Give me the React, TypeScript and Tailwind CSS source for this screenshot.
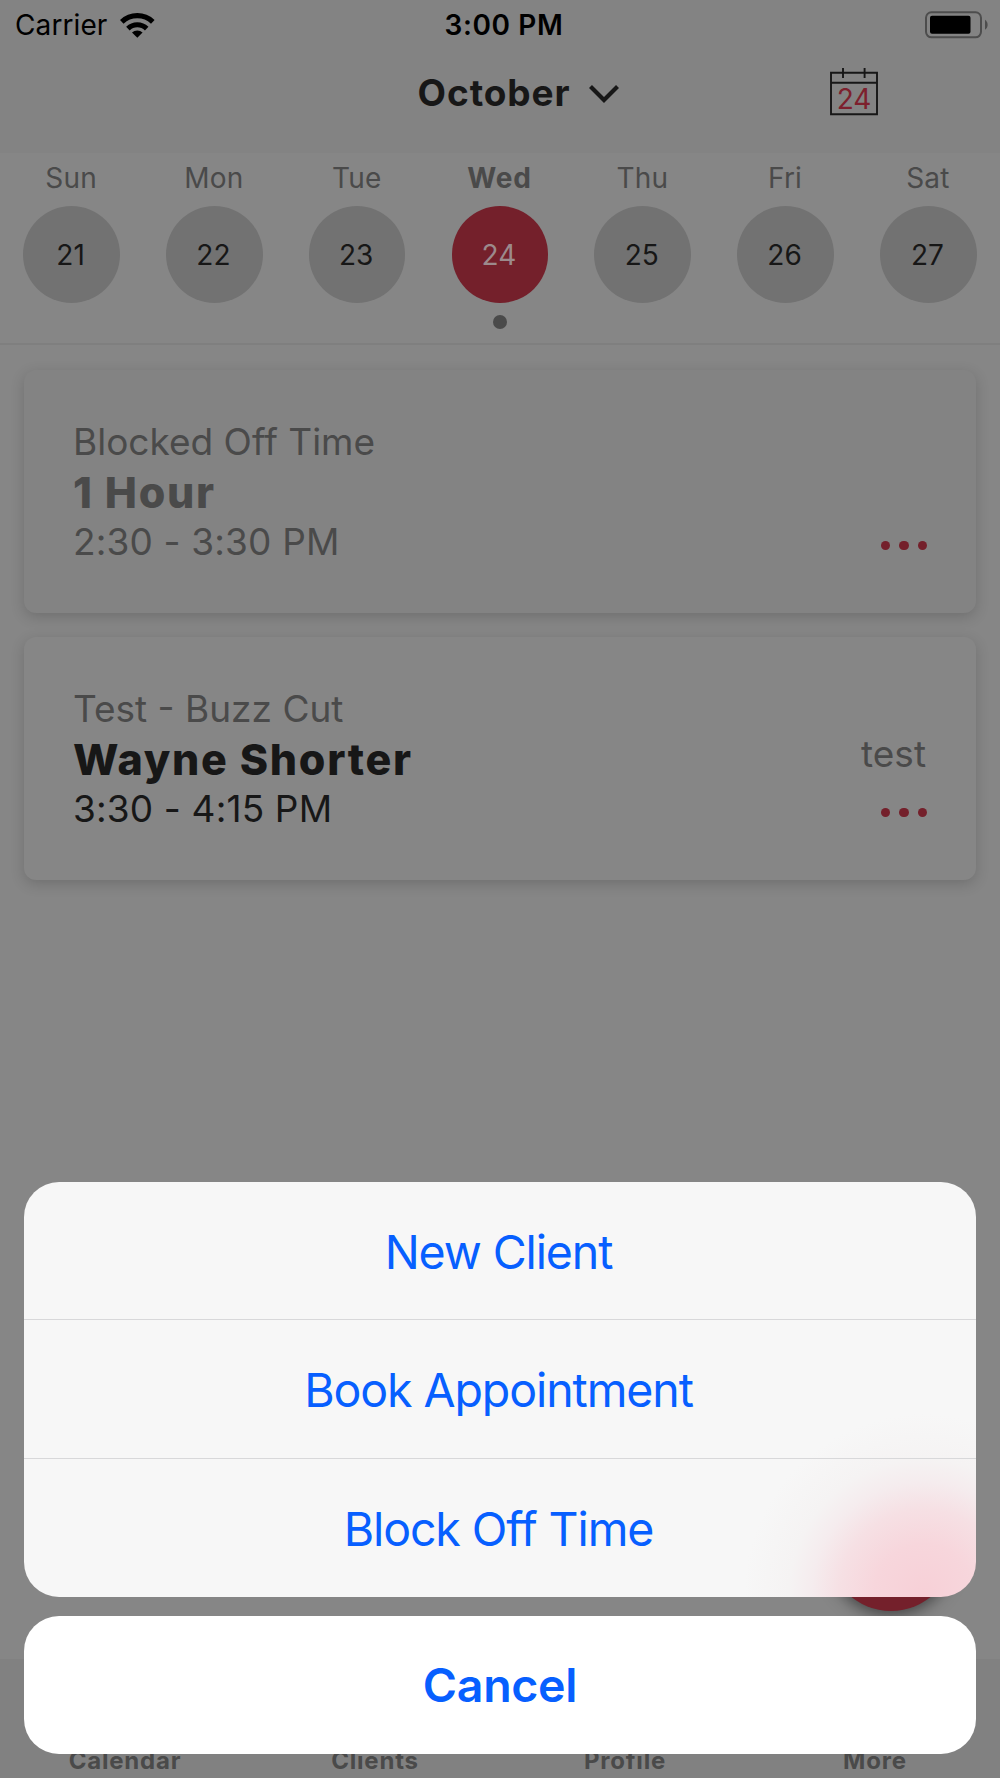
import { clsx } from 'clsx'

const days = [
  { label: 'Sun', date: 21 },
  { label: 'Mon', date: 22 },
  { label: 'Tue', date: 23 },
  { label: 'Wed', date: 24, selected: true },
  { label: 'Thu', date: 25 },
  { label: 'Fri', date: 26 },
  { label: 'Sat', date: 27 },
]

const tabs = ['Calendar', 'Clients', 'Profile', 'More']

const actions = ['New Client', 'Book Appointment', 'Block Off Time']

function StatusBar() {
  return (
    <div className="grid h-[50px] grid-cols-3 items-center pl-[15px] pr-3 text-[28px] leading-[51px] text-black">
      <div className="flex items-center gap-[13px]">
        <span className="tracking-[0.1px]">Carrier</span>
        <svg width="35" height="25" viewBox="0 0 35 25" className="mb-px">
          <path d="M17.3 24.7 L12 19.4 A8 8 0 0 1 22.6 19.4 Z" />
          <path d="M7.9 15.6 A13.4 13.4 0 0 1 26.7 15.6" fill="none" stroke="black" strokeWidth="5" />
          <path d="M1.8 8.9 A22.5 22.5 0 0 1 32.8 8.9" fill="none" stroke="black" strokeWidth="5.2" />
        </svg>
      </div>
      <span className="pl-[5px] text-center font-semibold tracking-[0.6px]">3:00 PM</span>
      <svg className="mb-[2px] justify-self-end" width="64" height="28" viewBox="0 0 64 28">
        <rect x="2" y="1.3" width="55" height="25" rx="5.5" fill="none" stroke="#4d4d4d" strokeWidth="2" />
        <rect x="6" y="4.8" width="40.5" height="18" rx="2" />
        <path d="M61 8.8 C64.5 10.8 64.5 16.8 61 18.8 Z" fill="#4d4d4d" />
      </svg>
    </div>
  )
}

function Header() {
  return (
    <div className="grid h-[103px] grid-cols-[1fr_auto_1fr] items-start text-[#171717]">
      <span />
      <div className="flex items-center gap-[18px] pl-[38px]">
        <h1 className="text-[37px] font-bold leading-[86px] tracking-[0.9px]">October</h1>
        <svg width="32" height="20" viewBox="0 0 32 20" className="mt-[2px]">
          <path d="M2.5 2.5 L16 16 L29.5 2.5" fill="none" stroke="#171717" strokeWidth="4.2" />
        </svg>
      </div>
      <svg width="48" height="48" viewBox="0 0 48 48" className="mr-[122px] mt-[18px] justify-self-end">
        <path
          d="M1 4.7 H47 V46.3 H1 Z M1 14.8 H47 M13 0 V10 M34.6 0 V10"
          fill="none"
          stroke="#171717"
          strokeWidth="1.9"
        />
        <text x="24" y="40.5" textAnchor="middle" fontSize="28" fill="#7d202d">
          24
        </text>
      </svg>
    </div>
  )
}

function WeekStrip() {
  return (
    <div className="flex h-[192px] justify-between border-b-2 border-[#7f7f7f] px-[23.3px]">
      {days.map(day => (
        <div key={day.date} className="flex w-[96.6px] flex-col items-center">
          <span
            className={clsx(
              'pr-px text-[28px] leading-[50px] text-[#4a4a4a]',
              day.selected ? 'font-bold tracking-[0.9px]' : 'tracking-[0.2px]'
            )}
          >
            {day.label}
          </span>
          <span
            className={clsx(
              'mt-[3px] flex size-[96.6px] items-center justify-center rounded-full pr-[2px] pt-[2px] text-[28px]',
              day.selected ? 'bg-[#74202b] text-[#9c8a8c]' : 'bg-[#727272] text-[#171717]'
            )}
          >
            {day.date}
          </span>
          {day.selected && <span className="mt-3 size-[14px] rounded-full bg-[#4a4a4a]" />}
        </div>
      ))}
    </div>
  )
}

interface AppointmentProps {
  service: string
  title: string
  time: string
  note?: string
  blocked?: boolean
}

function AppointmentCard({ service, title, time, note, blocked }: AppointmentProps) {
  return (
    <div
      className={clsx(
        'flex h-[243px] justify-between rounded-xl px-[49px] pt-[47px] text-[37px] shadow-[0_4px_14px_rgba(0,0,0,0.17)]',
        blocked ? 'bg-[#838383] text-[#4a4a4a]' : 'bg-[#868686] text-[#171717]'
      )}
    >
      <div>
        <p className="leading-[50px] text-[#4a4a4a]">{service}</p>
        <p className="text-[43px] font-extrabold leading-[50px] tracking-[1.7px]">{title}</p>
        <p className="leading-[49px] tracking-[0.15px]">{time}</p>
      </div>
      <div className="flex flex-col items-end pt-[44px] text-[#4a4a4a]">
        <span className="h-[50px] pr-px leading-[51px]">{note}</span>
        <div className="mt-[30px] flex gap-[9px]">
          <span className="size-[9.3px] rounded-full bg-[#74202b]" />
          <span className="size-[9.3px] rounded-full bg-[#74202b]" />
          <span className="size-[9.3px] rounded-full bg-[#74202b]" />
        </div>
      </div>
    </div>
  )
}

function ActionSheet() {
  return (
    <div className="absolute inset-x-6 bottom-6 flex flex-col gap-[19px] text-[46.5px] text-[#075fff]">
      <div className="h-[415px] divide-y divide-[#d8d8da] overflow-hidden rounded-[35px] bg-[#f7f7f7] bg-[radial-gradient(circle_at_900px_412px,#f7d0d7_0px,#f7d6dc_50px,#f6e0e4_85px,#f5ecee_112px,#f5f3f3_135px,#f7f7f7_180px)]">
        {actions.map(label => (
          <button
            key={label}
            className="block h-[138.33px] w-full pr-[3px] text-center leading-[140px] tracking-[-1.1px]"
          >
            {label}
          </button>
        ))}
      </div>
      <button className="h-[138px] rounded-[35px] bg-white text-center font-semibold leading-[139px] tracking-[-0.3px]">
        Cancel
      </button>
    </div>
  )
}

export default function App() {
  return (
    <div className="relative flex h-[1778px] w-[1000px] flex-col overflow-hidden bg-[#868686] font-['Inter',sans-serif]">
      <div className="bg-[#838383]">
        <StatusBar />
        <Header />
      </div>
      <WeekStrip />

      <div className="flex flex-1 flex-col gap-6 px-6 pt-[25px]">
        <AppointmentCard service="Blocked Off Time" title="1 Hour" time="2:30 - 3:30 PM" blocked />
        <AppointmentCard service="Test - Buzz Cut" title="Wayne Shorter" time="3:30 - 4:15 PM" note="test" />
      </div>

      <div className="grid h-[119px] grid-cols-4 items-end bg-[#818181] pb-px text-center text-[24px] font-bold leading-[32px] tracking-[0.8px] text-[#4a4a4a]">
        {tabs.map(tab => (
          <span key={tab}>{tab}</span>
        ))}
      </div>

      <div className="absolute bottom-[167px] right-[46px] size-[126px] rounded-full bg-[#74202b] shadow-[0_4px_16px_rgba(0,0,0,0.5)]" />
      <ActionSheet />
    </div>
  )
}
